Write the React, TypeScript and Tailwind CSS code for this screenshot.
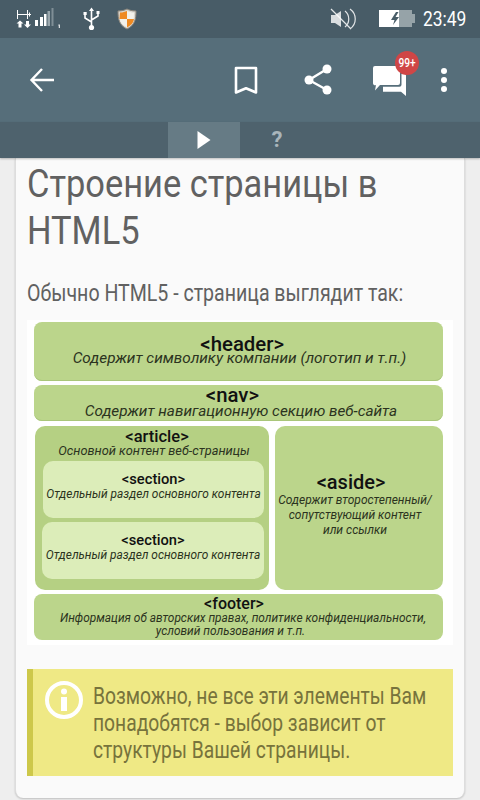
import React from "react";

const cond = "font-['Roboto',sans-serif] inline-block whitespace-nowrap";

function Box({ title, lines, cls, titleCls, subCls }: { title: string; lines: string[]; cls: string; titleCls: string; subCls: string }) {
  return (
    <div className={`flex flex-col items-center ${cls}`}>
      <div className={`${cond} font-medium text-[#111] ${titleCls}`}>{title}</div>
      {lines.map((l) => (
        <div key={l} className={`${cond} italic text-[#2b3320] ${subCls}`}>{l}</div>
      ))}
    </div>
  );
}

export default function App() {
  return (
    <div className="w-[480px] h-[800px] overflow-hidden bg-[#eeeeee] flex flex-col font-['Roboto',sans-serif]">
      {/* status bar */}
      <div className="h-[38px] shrink-0 bg-[#485c67] flex items-center relative text-white">
        <svg width="480" height="38" viewBox="0 0 480 38" className="absolute left-0 top-0">
          <g stroke="#fff" fill="none" strokeWidth="1">
            <path d="M17.500 10v9M27.500 10v9M17.500 14.500h10M27 14.500h4M29.500 12.500v4" />
          </g>
          <path d="M20 20.500l3.500 3h-2v4h-3v-4h-2zM27.500 28l-3.500-3.500h2v-3.500h3v3.500h2z" fill="#fff" />
          <rect x="35" y="20" width="3" height="6" fill="#fff" />
          <rect x="40" y="17" width="3" height="9" fill="#fff" />
          <rect x="44" y="14" width="2.500" height="12" fill="#fff" />
          <rect x="47.500" y="11" width="2.500" height="15" fill="#9aa7ad" />
          <rect x="51.500" y="8" width="2" height="18" fill="#7f8e96" />
          <path d="M58.500 24.500h1.300v3.500h-1v-2.500h-.5z" fill="#fff" />
          <g stroke="#fff" fill="none" strokeWidth="1.600">
            <path d="M91.500 10v16M85 13v5l6.500 4M98 12v4l-6.500 4" />
          </g>
          <path d="M91.500 7.500l2.500 3.500h-5zM83.500 12h3.200v3h-3.200zM96.500 11h3v3h-3z" fill="#fff" />
          <circle cx="91.500" cy="27.500" r="2.600" fill="#fff" />
          <path d="M118 11c4 0 7-1 9-2 2 1 5 2 9 2 0 8-1 14-9 18-8-4-9-10-9-18z" fill="#d9d6cf" stroke="#8c857a" strokeWidth="1" />
          <path d="M120 12.500c3 0 5-.6 7-1.500v8h-7.500zM127 19h7c-.6 3.800-3 6.500-7 8.500z" fill="#ef8a22" />
          <path d="M127 11c2 .9 4 1.500 7 1.500 0 2.500-.1 4.500-.3 6.500h-6.700zM119.700 19h7.300v8.500c-4-2-6.700-4.700-7.300-8.500z" fill="#f3f1ea" />
          <g stroke="#fff" fill="none" strokeWidth="1.200" opacity="0.85">
            <path d="M331 9l20 20M345 11c5 4 5 12 0 16M350 9c7 5 7 15 0 20" />
          </g>
          <path d="M331 15h4l6-4v16l-6-4h-4z" fill="#fff" opacity="0.8" />
          <rect x="379" y="10" width="33" height="17" fill="#96a3a8" />
          <rect x="412" y="14" width="3" height="9" fill="#96a3a8" />
          <rect x="379" y="10" width="20" height="17" fill="#fff" />
          <path d="M396 12l-5 8h3.500l-1.500 5 6-8h-3.500l3-5z" fill="#485c67" />
        </svg>
        <div className="absolute left-[423px] top-[6px] text-[21px] leading-[27px] whitespace-nowrap text-white font-['Roboto',sans-serif] origin-left scale-x-[0.83]">23:49</div>
      </div>

      {/* toolbar */}
      <div className="h-[84px] shrink-0 bg-[#566e7a] relative">
        <svg width="480" height="84" viewBox="0 0 480 84" className="absolute left-0 top-0 text-white">
          <path d="M54 42H32M42 31L31.500 42 42 53" stroke="#fff" strokeWidth="2.400" fill="none" />
          <path d="M236 30h20v24.500l-10-4.300-10 4.300z" stroke="#fff" strokeWidth="2.600" fill="none" strokeLinejoin="round" />
          <path d="M327 31L309 42l18 10" stroke="#fff" strokeWidth="2.400" fill="none" />
          <circle cx="327" cy="31" r="4.500" fill="#fff" />
          <circle cx="309" cy="42" r="4.500" fill="#fff" />
          <circle cx="327" cy="52" r="4.500" fill="#fff" />
          <path d="M375 28h23a2 2 0 0 1 2 2v15a2 2 0 0 1-2 2h-18l-5 5.500 1-5.500a2 2 0 0 1-3-2V30a2 2 0 0 1 2-2z" fill="#fff" />
          <path d="M401.500 36h3a1.500 1.500 0 0 1 1.500 1.500V58l-5-4.300H383V48.700h16.500a2 2 0 0 0 2-2z" fill="#fff" />
          <circle cx="444" cy="33" r="3" fill="#fff" />
          <circle cx="444" cy="42" r="3" fill="#fff" />
          <circle cx="444" cy="51" r="3" fill="#fff" />
        </svg>
        <div className="absolute left-[395px] top-[13px] w-6 h-6 rounded-full bg-[#cf4646] flex items-center justify-center">
          <span className="text-[12px] leading-none text-white font-medium origin-center scale-x-[0.85] whitespace-nowrap">99+</span>
        </div>
      </div>

      {/* tabs */}
      <div className="h-[36px] shrink-0 bg-[#4e626d] flex pl-[168px] shadow-[0_1px_2px_rgba(0,0,0,0.25)] z-10">
        <div className="w-[72px] h-full bg-[#667b85] flex items-center justify-center">
          <svg width="14" height="18" viewBox="0 0 14 18"><path d="M0.500 0l13 9-13 9z" fill="#fff" /></svg>
        </div>
        <div className="w-[74px] h-full flex items-center justify-center text-[#a9b5bb] font-bold text-[22px] leading-none">?</div>
      </div>

      {/* card */}
      <div className="ml-[15px] w-[450px] h-[640px] bg-[#fafafa] rounded-b-[8px] border-x border-[#dddddd] shadow-[0_1px_2px_rgba(0,0,0,0.2)] flex flex-col pl-[11px] pr-[11px] text-[#616161]">
        <div className="mt-[3px] h-[94px] text-[38px] leading-[47px] origin-top-left scale-x-[0.906] whitespace-nowrap font-normal">
          <div>Строение страницы в</div>
          <div>HTML5</div>
        </div>
        <div className="mt-[23px] h-[30px] text-[24px] leading-[30px] origin-top-left scale-x-[0.815] whitespace-nowrap">
          Обычно HTML5 - страница выглядит так:
        </div>

        <div className="mt-[12px] w-[426px] h-[325px] bg-white shrink-0 flex flex-col pl-[7px] pt-[2px]">
          <Box
            title="<header>"
            lines={["Содержит символику компании (логотип и т.п.)"]}
            cls="w-[409px] h-[59px] rounded-[8px] bg-[#bbd58b] pt-[14px] shadow-[inset_0_-1px_0_#a9c67a]"
            titleCls="text-[21px] leading-[16px] scale-x-[0.97] ml-[8px]"
            subCls="text-[15.500px] leading-[12px] scale-x-[0.99] ml-[1px]"
          />
          <Box
            title="<nav>"
            lines={["Содержит навигационную секцию веб-сайта"]}
            cls="mt-[4px] w-[409px] h-[36px] rounded-[8px] bg-[#bbd58b] pt-[1px] shadow-[inset_0_-1px_0_#a9c67a]"
            titleCls="text-[21px] leading-[18px] scale-x-[0.97] mr-[12px]"
            subCls="text-[15.300px] leading-[15px] ml-[5px]"
          />
          <div className="mt-[5px] flex gap-[6px] pl-[1px] h-[164px]">
            <div className="w-[234px] h-full rounded-[10px] bg-[#b5d083] pt-[3px] flex flex-col items-center">
              <div className={`${cond} font-medium text-[16.500px] leading-[15px] text-[#111] ml-[10px]`}>{"<article>"}</div>
              <div className={`${cond} italic text-[12.800px] leading-[14px] text-[#2b3320] ml-[4px]`}>Основной контент веб-страницы</div>
              <div className="mt-[3px] ml-[3px] w-[221px] h-[57px] rounded-[10px] bg-[#dcedb9] flex flex-col items-center pt-[10px]">
                <div className={`${cond} font-medium text-[14.700px] leading-[16px] text-[#111]`}>{"<section>"}</div>
                <div className={`${cond} italic text-[11.900px] leading-[14px] text-[#2b3320]`}>Отдельный раздел основного контента</div>
              </div>
              <div className="mt-[4px] ml-[2px] w-[222px] h-[57px] rounded-[10px] bg-[#dcedb9] flex flex-col items-center pt-[10px]">
                <div className={`${cond} font-medium text-[14.700px] leading-[16px] text-[#111]`}>{"<section>"}</div>
                <div className={`${cond} italic text-[11.900px] leading-[14px] text-[#2b3320]`}>Отдельный раздел основного контента</div>
              </div>
            </div>
            <div className="w-[168px] h-full rounded-[10px] bg-[#bbd58b] flex flex-col items-center pt-[45px] pr-[8px]">
              <div className={`${cond} font-medium text-[20px] leading-[22px] text-[#111] mr-[8px]`}>{"<aside>"}</div>
              <div className={`${cond} italic text-[12px] leading-[15px] text-[#2b3320]`}>Содержит второстепенный/</div>
              <div className={`${cond} italic text-[12px] leading-[15px] text-[#2b3320]`}>сопутствующий контент</div>
              <div className={`${cond} italic text-[12px] leading-[15px] text-[#2b3320]`}>или ссылки</div>
            </div>
          </div>
          <div className="mt-[4px] w-[409px] h-[46px] rounded-[8px] bg-[#bbd58b] pt-[2px] flex flex-col items-center">
            <div className={`${cond} font-medium text-[16px] leading-[16px] text-[#111] mr-[9px]`}>{"<footer>"}</div>
            <div className={`${cond} italic text-[11.900px] leading-[13px] text-[#2b3320] ml-[9px]`}>Информация об авторских правах, политике конфиденциальности,</div>
            <div className={`${cond} italic text-[11.900px] leading-[13px] text-[#2b3320] mr-[16px]`}>условий пользования и т.п.</div>
          </div>
        </div>

        <div className="mt-[24px] w-[426px] h-[107px] bg-[#efe985] border-l-[6px] border-[#cdc84a] shrink-0 flex">
          <svg width="38" height="38" viewBox="0 0 38 38" className="ml-[12px] mt-[12px] shrink-0">
            <circle cx="19" cy="19" r="17" stroke="#fff" strokeWidth="4" fill="none" />
            <circle cx="19" cy="10.500" r="3" fill="#fff" />
            <rect x="16" y="16" width="6" height="14" fill="#fff" />
          </svg>
          <div className="ml-[10px] mt-[14px] text-[24px] leading-[27px] text-[#77733c] origin-top-left scale-x-[0.803] whitespace-nowrap">
            <div>Возможно, не все эти элементы Вам</div>
            <div>понадобятся - выбор зависит от</div>
            <div>структуры Вашей страницы.</div>
          </div>
        </div>
      </div>
    </div>
  );
}
